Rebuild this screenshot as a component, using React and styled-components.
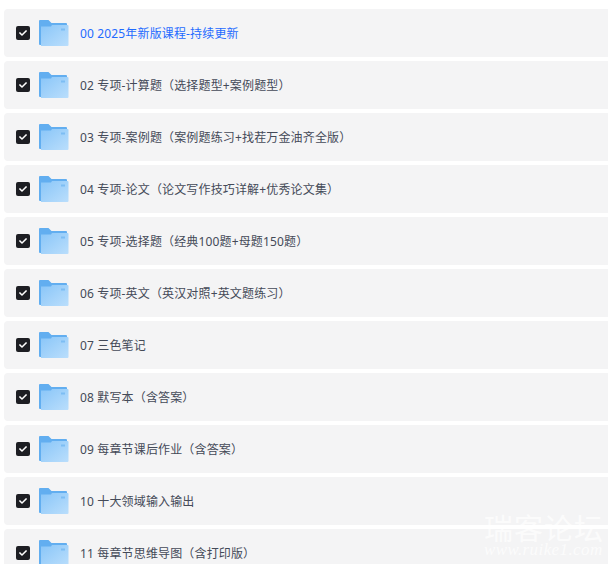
import styled, { createGlobalStyle } from "styled-components";
import { FaCheck } from "react-icons/fa";

const GlobalStyle = createGlobalStyle`
  html, body {
    margin: 0;
    height: 564px;
    overflow: hidden;
    background: #fff;
  }
`;

const folders = [
  { name: "00 2025年新版课程-持续更新", active: true },
  { name: "02 专项-计算题（选择题型+案例题型）" },
  { name: "03 专项-案例题（案例题练习+找茬万金油齐全版）" },
  { name: "04 专项-论文（论文写作技巧详解+优秀论文集）" },
  { name: "05 专项-选择题（经典100题+母题150题）" },
  { name: "06 专项-英文（英汉对照+英文题练习）" },
  { name: "07 三色笔记" },
  { name: "08 默写本（含答案）" },
  { name: "09 每章节课后作业（含答案）" },
  { name: "10 十大领域输入输出" },
  { name: "11 每章节思维导图（含打印版）" },
];

const List = styled.ul`
  list-style: none;
  margin: 0;
  padding: 9px 0 0 4px;
  display: flex;
  flex-direction: column;
  gap: 4px;
`;

const Row = styled.li`
  height: 48px;
  flex-shrink: 0;
  display: flex;
  align-items: center;
  padding-left: 12px;
  background: #f4f4f5;
  border-radius: 4px 0 0 4px;
`;

const Check = styled.span`
  width: 14px;
  height: 14px;
  margin-right: 9px;
  display: flex;
  align-items: center;
  justify-content: center;
  background: #1d1e23;
  border-radius: 2px;
  color: #fff;
  font-size: 8px;
`;

const FolderIcon = styled.svg`
  width: 30px;
  height: 28px;
  margin-right: 11px;
  flex-shrink: 0;
`;

const Name = styled.span`
  font: 12px/14px "Noto Sans", "Noto Sans CJK SC", sans-serif;
  letter-spacing: 0.15px;
  padding-top: 2px;
  color: ${(props) => (props.$active ? "#1f6bff" : "#444a58")};
`;

const Watermark = styled.div`
  position: absolute;
  left: 484px;
  top: 512px;
  width: 122px;
  color: rgba(255, 255, 255, 0.7);
  pointer-events: none;
`;

const MarkTitle = styled.div`
  font: 29px/30px "Noto Sans CJK SC", serif;
  letter-spacing: 1px;
  white-space: nowrap;
`;

const MarkUrl = styled.div`
  font: italic 17px/16px "Liberation Serif", serif;
  letter-spacing: 0.4px;
  white-space: nowrap;
`;

const Folder = ({ id }) => (
  <FolderIcon viewBox="0 0 30 28">
    <defs>
      <linearGradient id={id} x1="0" y1="0" x2="1" y2="1">
        <stop offset="0" stopColor="#8ac6f8" />
        <stop offset="1" stopColor="#badefc" />
      </linearGradient>
    </defs>
    <path d="M0 2a1 1 0 0 1 1-1h8.5l3 3H27a1 1 0 0 1 1 1v3H0z" fill="#62aef0" />
    <path d="M0 4h2v22h-1a1 1 0 0 1-1-1z" fill="#62aef0" />
    <path d="M2 7.5L12 7.5 13 6H28.5a1 1 0 0 1 1 1v19a1 1 0 0 1-1 1H2z" fill={`url(#${id})`} />
    <rect x="22" y="9.5" width="4" height="2" fill="#7dbdf3" />
  </FolderIcon>
);

const App = () => {
  return (
    <>
      <GlobalStyle />
      <List>
        {folders.map((item, i) => (
          <Row key={item.name}>
            <Check>
              <FaCheck />
            </Check>
            <Folder id={`folder-${i}`} />
            <Name $active={item.active}>{item.name}</Name>
          </Row>
        ))}
      </List>
      <Watermark>
        <MarkTitle>瑞客论坛</MarkTitle>
        <MarkUrl>www.ruike1.com</MarkUrl>
      </Watermark>
    </>
  );
};

export default App;
